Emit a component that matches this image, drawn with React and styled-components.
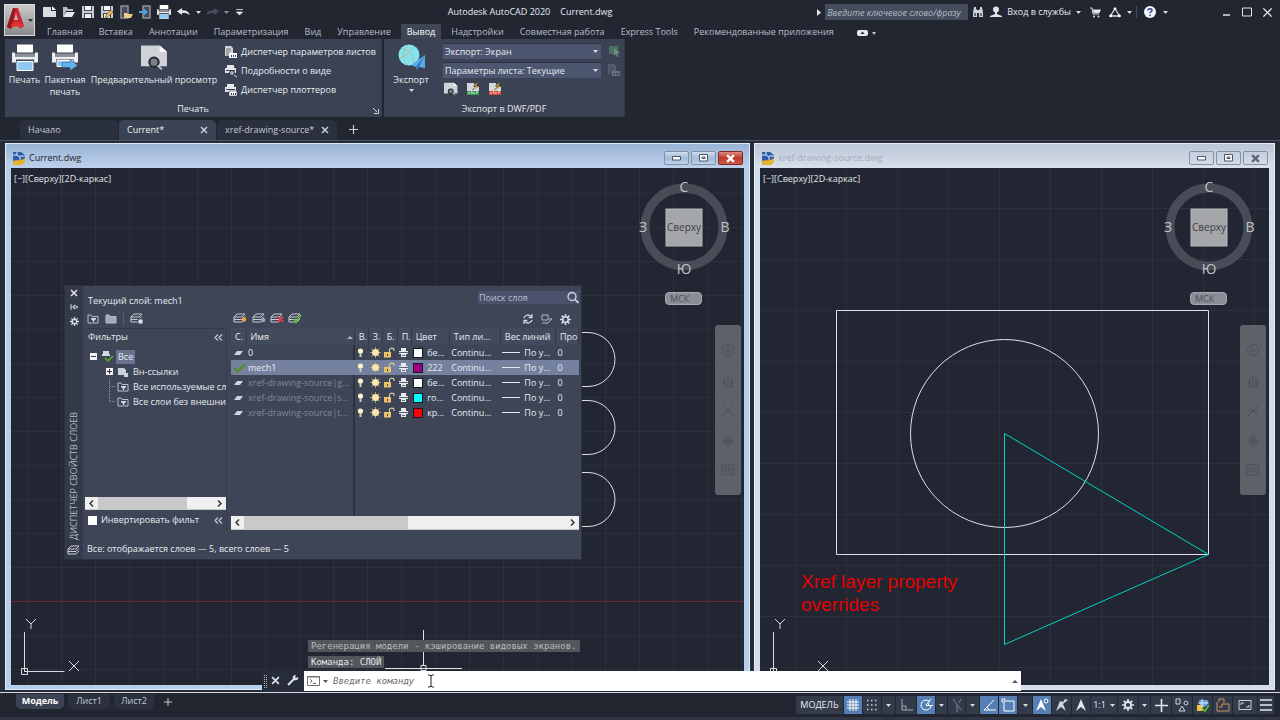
import React from "react";
import styled, { createGlobalStyle } from "styled-components";

const GlobalStyle = createGlobalStyle`
  * {
    box-sizing: border-box;
  }

  body {
    margin: 0;
    background: #212631;
    color: #e8ebf1;
    font-family: "Open Sans", "Noto Sans", sans-serif;
    font-size: 9px;
    line-height: 14px;
  }

  button, input, select {
    font: inherit;
    color: inherit;
    margin: 0;
    padding: 0;
    border: 0;
    background: none;
    border-radius: 0;
    outline: none;
  }

  a {
    color: inherit;
    text-decoration: none;
  }

  svg {
    display: block;
    flex: none;
  }
`;

const Shell = styled.div`
  display: flex;
  flex-direction: column;
  min-height: 100vh;
  overflow: hidden;
`;

/* ---------- title bar ---------- */

const Header = styled.header`
  display: flex;
  height: 39px;
  padding-left: 4px;
`;

const AppButton = styled.button`
  display: flex;
  align-items: center;
  justify-content: center;
  width: 31px;
  height: 32px;
  margin-top: 4px;
  background: linear-gradient(#c9c9c9, #8b8b8d);
  border: 1px solid #d9d9d9;
`;

const HeaderMain = styled.div`
  flex: 1;
  min-width: 0;
`;

const TitleRow = styled.div`
  display: flex;
  align-items: center;
  height: 24px;
  padding: 0 3px 0 5px;
`;

const ToolButton = styled.button`
  display: flex;
  align-items: center;
  justify-content: center;
  width: ${({ $w }) => $w || 19}px;
  height: ${({ $h }) => $h || 18}px;
  flex: none;
`;

const AppTitle = styled.div`
  display: flex;
  gap: 10px;
  margin: 0 auto;
  color: #e8eaf0;
  white-space: nowrap;
`;

const KeywordInput = styled.input`
  width: 143px;
  height: 16px;
  padding: 0 2px;
  background: #454c5b;
  font-style: italic;

  &::placeholder {
    color: #b4b9c5;
    opacity: 1;
  }
`;

const SignIn = styled.button`
  display: flex;
  align-items: center;
  gap: 5px;
  padding: 0 4px 0 2px;
  white-space: nowrap;
`;

const Divider = styled.span`
  width: 1px;
  height: 12px;
  margin: 0 3px;
  background: ${({ $color }) => $color || "#424959"};
`;

const WindowControls = styled.div`
  display: flex;
  margin-left: 47px;
`;

const RibbonTabs = styled.nav`
  display: flex;
  align-items: stretch;
  height: 15px;
  padding-left: 4px;
`;

const RibbonTab = styled.a`
  padding: 0 ${({ $active }) => ($active ? 6 : 8)}px;
  margin: 0 ${({ $active }) => ($active ? 2 : 0)}px;
  line-height: 15px;
  white-space: nowrap;
  color: ${({ $active }) => ($active ? "#ffffff" : "#b8bdc8")};
  background: ${({ $active }) => ($active ? "#3f4656" : "transparent")};
`;

/* ---------- ribbon ---------- */

const Ribbon = styled.section`
  display: flex;
  gap: 2px;
  height: 78px;
  padding-left: 5px;
`;

const Panel = styled.div`
  display: flex;
  flex-direction: column;
  background: #3b4253;
  border-right: 1px solid #333949;
`;

const PanelBody = styled.div`
  display: flex;
  flex: 1;
  padding-top: 3px;
`;

const PanelTitle = styled.div`
  display: flex;
  align-items: center;
  justify-content: center;
  position: relative;
  height: 16px;
`;

const Launcher = styled.button`
  position: absolute;
  right: 2px;
  bottom: 3px;
`;

const BigButton = styled.button`
  display: flex;
  flex-direction: column;
  align-items: center;
  width: ${({ $w }) => $w}px;
  gap: 3px;
  padding-top: 2px;
  line-height: 12px;
  white-space: nowrap;
`;

const SmallList = styled.div`
  display: flex;
  flex-direction: column;
  width: 159px;
  padding-left: 2px;
`;

const SmallButton = styled.button`
  display: flex;
  align-items: center;
  gap: 3px;
  height: 19px;
  white-space: nowrap;
`;

const ExportColumn = styled.div`
  display: flex;
  flex-direction: column;
  gap: 1px;
  margin: 0 2px 0 5px;
`;

const SelectRow = styled.div`
  display: flex;
  align-items: center;
  gap: 5px;
`;

const SelectWrap = styled.label`
  display: flex;
  align-items: center;
  width: 158px;
  height: 16px;
  padding-right: 3px;
  background: #4c566f;
  border-top: 1px solid #2c3240;
`;

const Select = styled.select`
  flex: 1;
  height: 15px;
  padding-left: 2px;
  appearance: none;
`;

const IconRow = styled.div`
  display: flex;
  gap: 8px;
  padding: 2px 0 0 1px;
`;

/* ---------- drawing tabs ---------- */

const FileTabs = styled.nav`
  display: flex;
  gap: 1px;
  height: 23px;
  padding: 3px 0 0 20px;
`;

const FileTab = styled.div`
  display: flex;
  align-items: center;
  justify-content: space-between;
  width: ${({ $w }) => $w}px;
  padding: 0 8px 0 8px;
  border-radius: 5px 5px 0 0;
  white-space: nowrap;
  color: ${({ $active }) => ($active ? "#f0f2f6" : "#c5c9d2")};
  background: ${({ $active }) => ($active ? "#3b4253" : "#2a303d")};
`;

/* ---------- document windows ---------- */

const Workspace = styled.main`
  position: relative;
  display: flex;
  flex: 1;
  gap: 4px;
  padding: 2px 5px;
  background: #252b37;
  border-top: 1px solid #4b5261;
  border-bottom: 1px solid #d5dae2;
`;

const DocWindow = styled.section`
  display: flex;
  flex-direction: column;
  flex: ${({ $grow }) => $grow} 1 0;
  min-width: 0;
  padding: 0 5px 4px;
  background: ${({ $active }) => ($active ? "#b7cfea" : "#d3dce9")};
  border: 1px solid ${({ $active }) => ($active ? "#dcebfa" : "#e7edf5")};
`;

const DocTitle = styled.header`
  display: flex;
  align-items: center;
  height: 24px;
  margin: 0 -5px;
  padding: 4px 6px 0 7px;
  gap: 4px;
  color: ${({ $active }) => ($active ? "#20242c" : "#a2acbb")};
  background: ${({ $active }) =>
    $active ? "linear-gradient(#9ab4d5, #bdd0ea)" : "linear-gradient(#bac5d6, #d8e0eb)"};
`;

const DocButtons = styled.div`
  display: flex;
  gap: 2px;
  margin-left: auto;
`;

const DocButton = styled.button`
  display: flex;
  align-items: center;
  justify-content: center;
  width: 25px;
  height: 14px;
  border: 1px solid ${({ $active, $close }) => ($close && $active ? "#7b2a26" : "#8391a8")};
  border-radius: 2px;
  background: ${({ $active, $close }) =>
    !$active
      ? "transparent"
      : $close
      ? "linear-gradient(#dd8d80, #bd3a2b 50%, #cf5a45)"
      : "linear-gradient(#d0deef, #a3bad7 50%, #bfd3ea)"};
`;

const Canvas = styled.div`
  position: relative;
  flex: 1;
  overflow: hidden;
  background-color: #212632;
  background-image: linear-gradient(to right, #2a313d 1px, transparent 1px),
    linear-gradient(#2a313d 1px, transparent 1px);
  background-size: ${({ $step }) => $step}px ${({ $step }) => $step}px;
  background-position: ${({ $origin }) => $origin};
`;

const ViewportLabel = styled.button`
  position: absolute;
  top: 4px;
  left: 3px;
  color: #e2e4ea;
`;

const Drawing = styled.svg`
  position: absolute;
  top: 0;
  left: 0;
  width: 100%;
  height: 100%;
`;

const Ucs = styled.svg`
  position: absolute;
  left: 9px;
  bottom: 5px;
`;

const ViewCube = styled.svg`
  position: absolute;
  top: 8px;
  right: 14px;
`;

const WcsButton = styled.button`
  position: absolute;
  top: 124px;
  right: 42px;
  width: 37px;
  height: 13px;
  padding-left: 4px;
  border-radius: 4px;
  border: 1px solid #a6a8af;
  background: #8b8e96;
  color: #4c4f59;
  line-height: 10px;
  text-align: left;
`;

const NavBar = styled.div`
  position: absolute;
  top: 157px;
  right: 3px;
  display: flex;
  flex-direction: column;
  align-items: center;
  justify-content: space-around;
  width: 26px;
  height: 170px;
  padding: 10px 0;
  border-radius: 3px;
  background: #5d6168;
`;

/* ---------- layer palette ---------- */

const Palette = styled.aside`
  position: absolute;
  top: 118px;
  left: 54px;
  display: flex;
  width: 516px;
  height: 273px;
  background: #3e4557;
  box-shadow: 0 0 0 1px #2c313e;
`;

const PaletteStrip = styled.div`
  display: flex;
  flex-direction: column;
  align-items: center;
  width: 18px;
  padding-bottom: 2px;
  background: #343a48;
`;

const StripTitle = styled.div`
  flex: 1;
  writing-mode: vertical-rl;
  transform: rotate(180deg);
  padding-top: 5px;
  color: #b6bbc6;
  white-space: nowrap;
`;

const PaletteMain = styled.div`
  display: flex;
  flex-direction: column;
  flex: 1;
  min-width: 0;
  padding: 0 2px;
`;

const PaletteTop = styled.div`
  display: flex;
  justify-content: space-between;
  height: 24px;
  padding: 5px 0 0 3px;
`;

const CurrentLayer = styled.span`
  padding-top: 3px;
`;

const SearchBox = styled.label`
  display: flex;
  align-items: center;
  width: 101px;
  height: 13px;
  background: #49526a;
`;

const SearchInput = styled.input`
  flex: 1;
  width: 80px;
  padding-left: 1px;

  &::placeholder {
    color: #b9bfce;
    opacity: 1;
  }
`;

const PaletteTools = styled.div`
  display: flex;
  align-items: center;
  justify-content: space-between;
  height: 18px;
  padding-right: 5px;
`;

const ToolGroup = styled.div`
  display: flex;
  align-items: center;
`;

const LayerTools = styled.div`
  display: flex;
  align-items: center;
  margin-left: 84px;
`;

const PaletteColumns = styled.div`
  display: flex;
  gap: 4px;
  height: 202px;
`;

const FilterColumn = styled.div`
  display: flex;
  flex-direction: column;
  width: 142px;
  border-right: 1px solid #363c4b;
`;

const FilterHead = styled.div`
  display: flex;
  align-items: center;
  justify-content: space-between;
  height: 17px;
  padding: 0 3px;
  border-top: 1px solid #333948;
`;

const Tree = styled.ul`
  flex: 1;
  margin: 0;
  padding: 4px 0 0;
  list-style: none;
`;

const TreeItem = styled.li`
  display: flex;
  align-items: center;
  gap: 2px;
  height: 15px;
  padding-left: ${({ $indent }) => $indent}px;
  white-space: nowrap;
`;

const TreeText = styled.span`
  padding: 0 2px;
  line-height: 14px;
  background: ${({ $active }) => ($active ? "#67738f" : "transparent")};
`;

const Scroll = styled.div`
  display: flex;
  align-items: center;
  justify-content: space-between;
  height: ${({ $h }) => $h}px;
  background: #f0f0f0;
  border-bottom: 1px solid #c8c8ca;
`;

const ScrollTrack = styled.div`
  flex: 1;
  height: 100%;
`;

const ScrollThumb = styled.div`
  width: ${({ $size }) => $size};
  height: 100%;
  background: #c9c9c9;
`;

const ScrollButton = styled.button`
  display: flex;
  justify-content: center;
  width: 13px;
`;

const InvertRow = styled.div`
  display: flex;
  align-items: center;
  justify-content: space-between;
  height: 20px;
  padding: 0 3px;
`;

const CheckLabel = styled.label`
  display: flex;
  align-items: center;
  gap: 4px;
  white-space: nowrap;
`;

const Checkbox = styled.input`
  appearance: none;
  flex: none;
  width: 9px;
  height: 9px;
  background: #ffffff;
`;

const TableColumn = styled.div`
  display: flex;
  flex-direction: column;
  flex: 1;
  min-width: 0;
`;

const TableArea = styled.div`
  flex: 1;
  background: linear-gradient(#2c3240, #2c3240) 122px 0 / 2px 100% no-repeat;
`;

const LayerTable = styled.table`
  width: 100%;
  table-layout: fixed;
  border-collapse: collapse;
`;

const Th = styled.th`
  width: ${({ $w }) => $w}px;
  height: 17px;
  padding: 0 0 0 4px;
  border-right: 1px solid #333948;
  background: #424a5d;
  font-weight: 400;
  text-align: left;
  white-space: nowrap;
`;

const ThInner = styled.span`
  display: flex;
  align-items: center;
  justify-content: space-between;
`;

const LayerRow = styled.tr`
  background: ${({ $active }) => ($active ? "#75829f" : "transparent")};
`;

const Td = styled.td`
  height: 15px;
  padding: 0 0 0 2px;
  line-height: 14px;
  white-space: nowrap;
  color: ${({ $dim }) => ($dim ? "#80889a" : "#e8ebf1")};
`;

const CellFlex = styled.span`
  display: flex;
  align-items: center;
  gap: 4px;
`;

const Swatch = styled.span`
  width: 10px;
  height: 10px;
  border: 1px solid #15181f;
  background: ${({ $color }) => $color};
`;

const PaletteStatus = styled.div`
  padding: 12px 2px 0;
`;

/* ---------- command line ---------- */

const CommandDock = styled.div`
  position: absolute;
  left: 262px;
  right: 259px;
  bottom: 1px;
`;

const History = styled.div`
  display: flex;
  flex-direction: column;
  align-items: flex-start;
  gap: 4px;
  padding: 0 0 3px 46px;
  font-family: "DejaVu Sans Mono", monospace;
`;

const HistoryLine = styled.span`
  padding: 0 3px;
  line-height: 12px;
  color: ${({ $dim }) => ($dim ? "#b9bbbd" : "#e6e7e9")};
  background: #53565a;
`;

const CommandRow = styled.div`
  display: flex;
  height: 20px;
  background: #262c38;
`;

const CommandField = styled.label`
  display: flex;
  align-items: center;
  flex: 1;
  gap: 3px;
  padding: 0 3px;
  background: #ffffff;
`;

const CommandInput = styled.input`
  flex: 1;
  min-width: 0;
  padding-left: 2px;
  color: #222222;
  font-family: "DejaVu Sans Mono", monospace;
  font-style: italic;

  &::placeholder {
    color: #6d6d6d;
    opacity: 1;
  }
`;

const TextCursor = styled.svg`
  position: absolute;
  left: 165px;
  bottom: 3px;
`;

/* ---------- status bar ---------- */

const StatusBar = styled.footer`
  display: flex;
  align-items: flex-start;
  justify-content: space-between;
  height: 27px;
  padding: 1px 6px 0 16px;
  border-bottom: 3px solid #2f3542;
`;

const LayoutTabs = styled.nav`
  display: flex;
  gap: 4px;
`;

const LayoutTab = styled.a`
  display: flex;
  justify-content: center;
  width: ${({ $w }) => $w}px;
  padding-bottom: 1px;
  border-radius: 0 0 5px 5px;
  font-weight: ${({ $active }) => ($active ? 700 : 400)};
  color: ${({ $active }) => ($active ? "#ffffff" : "#c3c8d1")};
  background: ${({ $active }) => ($active ? "#3b4253" : "#2a303d")};
`;

const StatusTools = styled.div`
  display: flex;
  gap: 1px;
  padding-top: 2px;
`;

const StatusButton = styled.button`
  display: flex;
  align-items: center;
  justify-content: center;
  gap: 4px;
  width: ${({ $w }) => $w || 18}px;
  height: 18px;
  background: ${({ $active }) => ($active ? "#5680b5" : "#333a49")};
  white-space: nowrap;
`;

/* ---------- icons ---------- */

const Icon = ({ w = 14, h = w, box, children }) => (
  <svg width={w} height={h} viewBox={box || `0 0 ${w} ${h}`} fill="none" aria-hidden="true">
    {children}
  </svg>
);

const Caret = ({ color = "#d5d9e2" }) => (
  <Icon w={5} h={3}>
    <path d="M0 0h5L2.500 3z" fill={color} />
  </Icon>
);

const Cross = ({ color = "#c9cdd6", size = 8, weight = 1.5 }) => (
  <Icon w={size} box="0 0 8 8">
    <path d="M1 1l6 6M7 1L1 7" stroke={color} strokeWidth={weight} />
  </Icon>
);

const Plus = ({ size = 8, color = "#c9cdd6" }) => (
  <Icon w={size} box="0 0 8 8">
    <path d="M4 0v8M0 4h8" stroke={color} strokeWidth={1} />
  </Icon>
);

const Chevron = ({ right }) => (
  <Icon w={5} h={7}>
    <path d={right ? "M1 0.500L4 3.500L1 6.500" : "M4 0.500L1 3.500L4 6.500"} stroke="#333" strokeWidth="1.500" />
  </Icon>
);

const Collapse = () => (
  <Icon w={9} h={7}>
    <path d="M4 0.500L1 3.500L4 6.500M8 0.500L5 3.500L8 6.500" stroke="#c3c9d6" strokeWidth="1.200" />
  </Icon>
);

const Printer = ({ w = 14, h = w, arrow }) => (
  <Icon w={w} h={h} box="0 0 26 26">
    <path d="M5 0h16v8H5z" fill="#fff" />
    <path d="M0 8h3v4h20V8h3v10h-4v-3H4v3H0z" fill="#eceef1" />
    <path d="M3 9h20v3H3z" fill="#8a8f98" />
    {arrow ? (
      <>
        <path d="M5 16h16v6H5z" fill="#8ec8f5" stroke="#fff" strokeWidth="1" />
        <path d="M10 18h8v-3l8 6-8 5v-3h-8z" fill="#5fb4f0" stroke="#3b4253" strokeWidth="0.500" />
      </>
    ) : (
      <path d="M5 17h16v9H5z" fill="#8ec8f5" stroke="#fff" strokeWidth="1" />
    )}
  </Icon>
);

const PreviewIcon = ({ w = 26, h = 25 }) => (
  <Icon w={w} h={h} box="0 0 26 25">
    <path d="M0 1h18l7 6v14H0z" fill="#cfd2d6" />
    <path d="M18 1v6h7z" fill="#fff" />
    <circle cx="12.500" cy="17" r="4.500" fill="#7a8089" stroke="#23272f" strokeWidth="2" />
    <path d="M16 20l4 4" stroke="#c3c7cc" strokeWidth="1.800" />
  </Icon>
);

const LogoA = () => (
  <Icon w={27} h={26}>
    <path d="M1 20L7 1h5l6 18-4 3-2-5H7l-2 5z" fill="#d2242f" />
    <path d="M1 20L7 1l2.500 1L6 17l-1 5z" fill="#97151f" />
    <path d="M8 13l2-7 2 7z" fill="#b5b5b5" />
    <path d="M5 18c4-4 8-4 13 1l-4 2c-3-2-5-2-8 0z" fill="#e0352f" />
    <path d="M22 12h5l-2.500 3z" fill="#333" />
  </Icon>
);

const NewIcon = () => (
  <Icon w={14} h={12}>
    <path d="M0 1h8v4h5v6H0z" fill="#d9dce0" />
    <path d="M9 0l4 4H9z" fill="#fff" />
  </Icon>
);

const OpenIcon = () => (
  <Icon w={14} h={12}>
    <path d="M1 1h4l1 2h5v2H4L1 11z" fill="#b9bcc2" />
    <path d="M4 6h9l-3 5H1z" fill="#e6e8eb" />
  </Icon>
);

const SaveIcon = ({ pencil }) => (
  <Icon w={14} h={14}>
    <path d="M1 1h12v12H1z" fill="#c9ccd1" />
    <path d="M3 1h8v5H3z" fill="#4b505a" />
    <path d="M4 1h6v4H4z" fill="#f4f5f7" />
    <path d="M3 8h8v5H3z" fill="#3d424c" />
    <path d="M4 9h6v4H4z" fill="#eceef0" />
    {pencil && <path d="M5 13l1-3 5-5 2 2-5 5z" fill="#e9b657" stroke="#6d4a20" strokeWidth="0.600" />}
  </Icon>
);

const DeviceIcon = ({ out }) => (
  <Icon w={14} h={14}>
    <path d={out ? "M5 1h7v12H5z" : "M2 1h7v12H2z"} stroke="#8d939d" strokeWidth="1.500" fill="#454b58" />
    {out ? (
      <path d="M1 6h5V3.500l4 3.500-4 3.500V8H1z" fill="#4da3e8" />
    ) : (
      <path d="M5 8h3l1 1h5l-2 4H5z" fill="#e9cf86" />
    )}
  </Icon>
);

const UndoIcon = ({ color = "#e3e6eb", flip }) => (
  <Icon w={14} h={10}>
    <path
      d="M0 4.500L5 1v2.200c4 0 7 1.300 8 5C11 6 8 5.800 5 5.900V8z"
      fill={color}
      transform={flip ? "matrix(-1 0 0 1 14 0)" : undefined}
    />
  </Icon>
);

const MoreIcon = () => (
  <Icon w={7} h={7}>
    <path d="M0 0.500h7M0.500 3h6L3.500 6z" stroke="#e1e4ea" fill="#e1e4ea" strokeWidth="0.800" />
  </Icon>
);

const BinocularsIcon = () => (
  <Icon w={12} h={12}>
    <path d="M2 1h2v2l1 1v7H1V7zM10 1H8v2L7 4v7h4V7zM5 4h2v3H5z" fill="#cfd3dc" />
    <path d="M2 7h2v3H2zM8 7h2v3H8z" fill="#666d7b" />
  </Icon>
);

const UserIcon = () => (
  <Icon w={12} h={12}>
    <circle cx="6" cy="3.500" r="3" fill="#dfe2e8" />
    <path d="M5 6h2v2l5 2v1H0v-1l5-2z" fill="#dfe2e8" />
  </Icon>
);

const CartIcon = () => (
  <Icon w={11} h={11}>
    <path d="M0 1h2l1 6h6" stroke="#e3e6ec" />
    <path d="M3 2.500h8L9.500 6H3.500z" fill="#e3e6ec" />
    <circle cx="4" cy="9.500" r="1" fill="#e3e6ec" />
    <circle cx="8.500" cy="9.500" r="1" fill="#e3e6ec" />
  </Icon>
);

const AutodeskIcon = () => (
  <Icon w={12} h={11}>
    <path d="M6 1.500L10.500 9h-9z" stroke="#d7dbe3" strokeWidth="1.300" />
    <circle cx="6" cy="1.800" r="1.400" fill="#fff" />
    <circle cx="1.700" cy="8.800" r="1.500" fill="#fff" />
    <circle cx="10.300" cy="8.800" r="1.500" fill="#fff" />
  </Icon>
);

const HelpIcon = () => (
  <Icon w={12} h={12}>
    <circle cx="6" cy="6" r="6" fill="#f2f4f8" />
    <path d="M4 4.600c0-2.600 4-2.400 4-.2C8 5.800 6 5.800 6 7.300" stroke="#2c3f8c" strokeWidth="1.400" />
    <circle cx="6" cy="9.300" r="0.900" fill="#2c3f8c" />
  </Icon>
);

const GlobeIcon = () => (
  <Icon w={27} h={27}>
    <circle cx="11" cy="11" r="10.500" fill="#7fe3f3" />
    <path d="M4 4c8 3 12 8 12 16M2 14C8 12 13 8 16 2M10 1C4 7 5 15 9 21" stroke="#c2b98d" />
    <path d="M27 11L13 21l5 2 1 3 2-3 6 1z" fill="#5aa9e8" />
    <path d="M27 11l-9 12 1 3 2-3z" fill="#2f77b5" />
  </Icon>
);

const PageSetupIcon = ({ dim }) => (
  <Icon w={14} h={14}>
    <path d="M1 1h6l2 2v8H1z" fill={dim ? "#596071" : "#d0d3d8"} />
    <path d="M2 4h5M2 6h5M2 8h3M2 10h3" stroke={dim ? "#3b4253" : "#5b616d"} strokeWidth="0.800" />
    <path d="M5 8h8v5H5z" fill={dim ? "#697083" : "#fff"} />
    <path d="M7 10h1v2H7zM9 10h1v2H9zM11 10h1v2h-1z" fill="#3b4253" />
  </Icon>
);

const SmallPrinter = ({ lens }) => (
  <Icon w={14} h={14}>
    <path d="M3 1h7v3H3zM1 4h11v5H1z" fill="#e4e6ea" />
    <path d="M2 6h9v1H2z" fill="#3b4253" />
    {lens ? (
      <>
        <circle cx="8" cy="9" r="2.500" fill="#aab0bb" stroke="#2b303b" />
        <path d="M10 11l3 2" stroke="#e4e6ea" />
      </>
    ) : (
      <>
        <path d="M5 8h8v5H5z" fill="#fff" stroke="#3b4253" strokeWidth="0.600" />
        <path d="M7 10h1v2H7zM9 10h1v2H9zM11 10h1v2h-1z" fill="#3b4253" />
      </>
    )}
  </Icon>
);

const PickIcon = () => (
  <Icon w={13} h={13}>
    <path d="M1 1h9v8H1z" fill="#49715f" />
    <path d="M6 3l6 5-3 .5 1.500 3-1.500.8L8 9 6 11z" fill="#6d8f80" />
  </Icon>
);

const FileKindIcon = ({ color }) => (
  <Icon w={14} h={14}>
    <path d="M1 1h7v4h5v8H1z" fill="#d4d7db" />
    <path d="M1 9h12v4H1z" fill={color} />
    <path d="M3 10v2M5 10h1v2M8 10v2M10 10h2M10 11h1" stroke="#fff" strokeWidth="0.800" />
    <path d="M12 0L7 4h3L6 8l7-4h-3z" fill="#f3c14b" stroke="#5c4b22" strokeWidth="0.400" />
  </Icon>
);

const DwgIcon = () => (
  <Icon w={12} h={13}>
    <path d="M0 0h8l4 3v7H0z" fill="#2b5ea8" />
    <path d="M0 3h4M7 4h5M4 0v3l3 2v3" stroke="#e6eefa" />
    <path d="M0 9c4-2 6 1 12-3v4l-3 3H0z" fill="#e7b32d" />
  </Icon>
);

const FolderIcon = ({ solid }) => (
  <Icon w={12} h={10}>
    <path d="M1 9V1h3l1 1.500h6V9z" stroke="#b9bfca" fill={solid ? "#a3a9b5" : "none"} />
    {!solid && <path d="M4 4h5v1L7 7v1H6V7L4 5z" fill="#d3d7df" />}
  </Icon>
);

const LayersIcon = ({ children }) => (
  <Icon w={14} h={12}>
    <path d="M4 1h8L9 4H1zM1 6.500h8l3-3M1 9h8l3-3M1 4v5" stroke="#c8ccd4" fill="none" />
    {children}
  </Icon>
);

const MiniLayer = () => (
  <Icon w={11} h={6}>
    <path d="M4 1h6L7 5H1z" fill="#c6d5ee" />
  </Icon>
);

const CheckIcon = () => (
  <Icon w={13} h={10}>
    <path d="M1 5l4 3.500L12 1" stroke="#4f8f1f" strokeWidth="2.200" />
  </Icon>
);

const BulbIcon = () => (
  <Icon w={9} h={11}>
    <circle cx="4.500" cy="4" r="2.600" fill="#fbf6cc" />
    <path d="M3.500 6h2v4h-2z" fill="#d2cfb2" />
  </Icon>
);

const SunIcon = () => (
  <Icon w={11} h={11}>
    <path d="M5.500 0v11M0 5.500h11M1.500 1.500l8 8M9.500 1.500l-8 8" stroke="#a79f7c" />
    <circle cx="5.500" cy="5.500" r="3.500" fill="#fbe7ae" />
  </Icon>
);

const LockIcon = () => (
  <Icon w={11} h={11}>
    <path d="M5.500 5V3c0-2.500 4.500-2.500 4.500 0v1" stroke="#d9cd9f" strokeWidth="1.100" />
    <path d="M0 5h7v5.500H0z" fill="#e8c36b" />
    <path d="M3 7h1v2H3z" fill="#4b3f1d" />
  </Icon>
);

const PlotIcon = () => (
  <Icon w={9} h={9}>
    <path d="M2 0h5v3H2zM0 3h9v3H0zM2 6h5v3H2z" fill="#e8eaee" />
    <path d="M0 4h9v1H0zM3 7h3v1H3z" fill="#596174" />
  </Icon>
);

const Gear = ({ w = 12, color = "#d4d8e0", hole = "#3e4557" }) => (
  <Icon w={w} box="0 0 12 12">
    <path d="M6 0v12M0 6h12M1.800 1.800l8.400 8.400M10.200 1.800l-8.400 8.400" stroke={color} strokeWidth="1.700" />
    <circle cx="6" cy="6" r="3" stroke={color} strokeWidth="1.800" fill={hole} />
  </Icon>
);

const Viewcube = () => (
  <ViewCube width="92" height="104" viewBox="0 0 92 104" aria-hidden="true">
    <circle cx="46" cy="51" r="39" fill="none" stroke="#484c56" strokeWidth="9" />
    <rect x="28" y="33" width="36" height="37" fill="#a5a6a9" stroke="#b8b9bb" />
    <g fontFamily="Open Sans, sans-serif" fontSize="14" fill="#c0c3ca" textAnchor="middle">
      <text x="46" y="16">С</text>
      <text x="46" y="98">Ю</text>
      <text x="5" y="56">З</text>
      <text x="87" y="56">В</text>
      <text x="46" y="55" fontSize="10" fill="#3d4048">Сверху</text>
    </g>
  </ViewCube>
);

const NavTools = () => (
  <NavBar>
    <Icon w={14}>
      <circle cx="7" cy="7" r="5.500" stroke="#4d5159" />
      <circle cx="7" cy="7" r="2" stroke="#4d5159" />
    </Icon>
    <Icon w={14} h={16}>
      <path d="M4 15V5M7 15V2M10 15V5M2 8l2 7h7l1-8" stroke="#4d5159" />
    </Icon>
    <Icon w={14}>
      <path d="M1 1l12 12M13 1L1 13M3 7h8" stroke="#4d5159" />
    </Icon>
    <Icon w={14}>
      <path d="M7 1v12M1 7h12M4 4h6v6H4z" stroke="#4d5159" />
    </Icon>
    <Icon w={14}>
      <path d="M1 2h12v10H1zM4 5h4v4H4zM10 5v6" stroke="#4d5159" />
    </Icon>
  </NavBar>
);

const UcsIcon = () => (
  <Ucs width="62" height="62" aria-hidden="true">
    <path d="M4.500 14v40M4.500 53.500h40" stroke="#d9dbe0" />
    <path d="M1.500 50.500h6v6h-6z" stroke="#d9dbe0" fill="none" />
    <path d="M6 1l5 5 5-5M11 6v5" stroke="#d9dbe0" fill="none" />
    <path d="M49 43l10 10M59 43L49 53" stroke="#d9dbe0" />
  </Ucs>
);

/* ---------- data ---------- */

const ribbonTabs = [
  "Главная",
  "Вставка",
  "Аннотации",
  "Параметризация",
  "Вид",
  "Управление",
  "Вывод",
  "Надстройки",
  "Совместная работа",
  "Express Tools",
  "Рекомендованные приложения",
];

const layers = [
  { name: "0", colorName: "бе...", color: "#ffffff" },
  { name: "mech1", colorName: "222", color: "#990080", active: true },
  { name: "xref-drawing-source|g...", colorName: "бе...", color: "#ffffff", dim: true },
  { name: "xref-drawing-source|s...", colorName: "го...", color: "#00ffff", dim: true },
  { name: "xref-drawing-source|t...", colorName: "кр...", color: "#ff0000", dim: true },
];

const columns = [
  ["С.", 15],
  ["Имя", 108],
  ["В.", 14],
  ["З.", 14],
  ["Б.", 15],
  ["П.", 14],
  ["Цвет", 38],
  ["Тип ли...", 51],
  ["Вес линий", 55],
  ["Про", 23],
];

const line = "#cdd2dc";

const statusItems = [
  { label: "Сетка", w: 18, active: true, icon: <path d="M4 1v12M7 1v12M10 1v12M1 4h12M1 7h12M1 10h12" stroke="#fff" /> },
  { label: "Шаг", w: 18, icon: <path d="M2 2.500h10M2 7h10M2 11.500h10" stroke={line} strokeWidth="1.500" strokeDasharray="1.500 2.500" /> },
  { label: "Параметры шага", w: 13, caret: true },
  { label: "Орто", w: 20, icon: <path d="M3 1v11h11M3 8h4v4" stroke="#a4abb8" /> },
  { label: "Полярное отслеживание", w: 18, active: true, icon: <path d="M11 4a5 5 0 1 0 1 4M7 7.500h7M7 7l5-6M9 5l1 3" stroke="#fff" /> },
  { label: "Углы", w: 11, caret: true },
  { label: "Изометрия", w: 17, icon: <path d="M3 1l8 11M7 7v7M11 1L9 5" stroke="#7f8795" /> },
  { label: "Изоплоскость", w: 13, caret: true },
  { label: "Объектное отслеживание", w: 18, active: true, icon: <path d="M12 2L2 12h12M5 9l2 3" stroke="#fff" /> },
  { label: "Объектная привязка", w: 18, active: true, icon: <path d="M5 3h8v10H3V5M1 1h3v3H1z" stroke="#fff" /> },
  { label: "Режимы привязки", w: 14, caret: true },
  {
    label: "Аннотации",
    w: 18,
    active: true,
    icon: (
      <>
        <path d="M6 1L1 13l5-4 5 4z" fill="#fff" />
        <circle cx="11" cy="3" r="2" stroke="#fff" />
      </>
    ),
  },
  { label: "Автомасштаб", w: 19, icon: <path d="M5 3L1 13l5-4 5 4-3-7 5-4-3-1-2 3z" fill={line} /> },
  { label: "Масштаб аннотаций", w: 18, icon: <path d="M7 1L2 13l5-4 5 4z" fill="#e5e8ee" /> },
];

const rest = [
  {
    label: "Изоляция объектов",
    w: 20,
    icon: <path d="M1 1h4v5H1zM7 8l3 5H4zM11 3a2 2 0 1 1 0 4 2 2 0 1 1 0-4" stroke={line} />,
  },
  {
    label: "Производительность",
    w: 19,
    icon: (
      <>
        <path d="M3 2h8l2 3-4 4H4z" fill="#6aa6e6" />
        <path d="M1 7h6v6H1z" fill="#f0c341" />
        <path d="M6 10l3 3 4-6" stroke="#55b045" strokeWidth="2" />
        <path d="M6 1v8M2 5h10" stroke="#dce9f8" />
      </>
    ),
  },
  {
    label: "Импорт",
    w: 19,
    icon: <path d="M1 13V4M3 4V1h5v4M1 13h12V6H6v3H3" stroke="#c9995f" />,
  },
  { label: "Чистый экран", w: 24, icon: <path d="M1 2.500h12v9H1zM3 7V5h3M11 7v2H8" stroke={line} /> },
  { label: "Адаптация", w: 16, icon: <path d="M1 2h12M1 7h12M1 12h12" stroke="#e5e8ee" strokeWidth="1.500" /> },
];

/* ---------- sections ---------- */

const TitleBar = () => (
  <Header>
    <AppButton aria-label="Меню приложения">
      <LogoA />
    </AppButton>
    <HeaderMain>
      <TitleRow>
        <ToolButton aria-label="Создать"><NewIcon /></ToolButton>
        <ToolButton aria-label="Открыть"><OpenIcon /></ToolButton>
        <ToolButton aria-label="Сохранить"><SaveIcon /></ToolButton>
        <ToolButton aria-label="Сохранить как"><SaveIcon pencil /></ToolButton>
        <ToolButton aria-label="Открыть из сети"><DeviceIcon /></ToolButton>
        <ToolButton aria-label="Сохранить в сети"><DeviceIcon out /></ToolButton>
        <ToolButton aria-label="Печать"><Printer w={14} /></ToolButton>
        <ToolButton $w={21} aria-label="Отменить"><UndoIcon /></ToolButton>
        <ToolButton $w={8} aria-label="Список отмены"><Caret /></ToolButton>
        <ToolButton aria-label="Повторить"><UndoIcon color="#454c5a" flip /></ToolButton>
        <ToolButton $w={10} aria-label="Список повтора"><Caret color="#8a909c" /></ToolButton>
        <ToolButton $w={16} aria-label="Адаптация панели"><MoreIcon /></ToolButton>
        <AppTitle>
          <span>Autodesk AutoCAD 2020</span>
          <span>Current.dwg</span>
        </AppTitle>
        <ToolButton $w={12} aria-label="Развернуть поиск">
          <Icon w={4} h={7}><path d="M0 0l4 3.500L0 7z" fill="#e1e4ea" /></Icon>
        </ToolButton>
        <KeywordInput placeholder="Введите ключевое слово/фразу" aria-label="Поиск" />
        <ToolButton $w={20} aria-label="Найти"><BinocularsIcon /></ToolButton>
        <SignIn>
          <UserIcon />
          Вход в службы
          <Caret />
        </SignIn>
        <ToolButton $w={20} aria-label="Магазин"><CartIcon /></ToolButton>
        <ToolButton $w={20} aria-label="Приложения"><AutodeskIcon /></ToolButton>
        <ToolButton $w={8} aria-label="Список приложений"><Caret /></ToolButton>
        <Divider />
        <ToolButton $w={20} aria-label="Справка"><HelpIcon /></ToolButton>
        <ToolButton $w={10} aria-label="Список справки"><Caret /></ToolButton>
        <WindowControls>
          <ToolButton $w={20} aria-label="Свернуть">
            <Icon w={8} h={8}><path d="M0 7h7" stroke="#e1e4ea" strokeWidth="1.500" /></Icon>
          </ToolButton>
          <ToolButton $w={20} aria-label="Развернуть">
            <Icon w={10} h={10}><path d="M0.500 1h9v8h-9z" stroke="#e1e4ea" /></Icon>
          </ToolButton>
          <ToolButton $w={20} aria-label="Закрыть"><Cross size={11} weight={1} color="#eceef2" /></ToolButton>
        </WindowControls>
      </TitleRow>
      <RibbonTabs>
        {ribbonTabs.map((tab) => (
          <RibbonTab key={tab} href="#ribbon" $active={tab === "Вывод"}>
            {tab}
          </RibbonTab>
        ))}
        <ToolButton $w={50} aria-label="Свернуть ленту">
          <Icon w={20} h={8}>
            <rect x="0" y="1" width="11" height="6" rx="2" fill="#e6e8ee" />
            <path d="M3.500 5h4L5.500 2.500z" fill="#212631" />
            <path d="M15 3h4l-2 3z" fill="#c3c8d1" />
          </Icon>
        </ToolButton>
      </RibbonTabs>
    </HeaderMain>
  </Header>
);

const RibbonPanels = () => (
  <Ribbon id="ribbon">
    <Panel>
      <PanelBody>
        <BigButton $w={39}>
          <Printer w={26} h={27} />
          Печать
        </BigButton>
        <BigButton $w={42}>
          <Printer w={26} h={27} arrow />
          <span>
            Пакетная
            <br />
            печать
          </span>
        </BigButton>
        <BigButton $w={136}>
          <PreviewIcon w={27} h={27} />
          Предварительный просмотр
        </BigButton>
        <SmallList>
          <SmallButton><PageSetupIcon />Диспетчер параметров листов</SmallButton>
          <SmallButton><SmallPrinter lens />Подробности о виде</SmallButton>
          <SmallButton><SmallPrinter />Диспетчер плоттеров</SmallButton>
        </SmallList>
      </PanelBody>
      <PanelTitle>
        Печать
        <Launcher aria-label="Параметры печати">
          <Icon w={6} h={6}><path d="M0 0l4 4M5.500 1v4.500H1" stroke="#cdd1da" /></Icon>
        </Launcher>
      </PanelTitle>
    </Panel>
    <Panel>
      <PanelBody>
        <BigButton $w={54}>
          <GlobeIcon />
          Экспорт
          <Caret />
        </BigButton>
        <ExportColumn>
          <SelectRow>
            <SelectWrap>
              <Select aria-label="Экспорт"><option>Экспорт: Экран</option></Select>
              <Caret />
            </SelectWrap>
            <ToolButton $w={16} aria-label="Выбрать рамку"><PickIcon /></ToolButton>
          </SelectRow>
          <SelectRow>
            <SelectWrap>
              <Select aria-label="Параметры листа"><option>Параметры листа: Текущие</option></Select>
              <Caret />
            </SelectWrap>
            <ToolButton $w={16} aria-label="Параметры листа"><PageSetupIcon dim /></ToolButton>
          </SelectRow>
          <IconRow>
            <button aria-label="Просмотр"><PreviewIcon w={14} h={14} /></button>
            <button aria-label="DWF"><FileKindIcon color="#3c9a57" /></button>
            <button aria-label="PDF"><FileKindIcon color="#d8443c" /></button>
          </IconRow>
        </ExportColumn>
      </PanelBody>
      <PanelTitle>Экспорт в DWF/PDF</PanelTitle>
    </Panel>
  </Ribbon>
);

const DocumentTitle = ({ title, active }) => (
  <DocTitle $active={active}>
    <DwgIcon />
    {title}
    <DocButtons>
      <DocButton $active={active} aria-label="Свернуть">
        <Icon w={9} h={5}><path d="M0.500 0.500h8v3.500h-8z" stroke="#4b5566" fill="#fff" /></Icon>
      </DocButton>
      <DocButton $active={active} aria-label="Развернуть">
        <Icon w={9} h={8}><path d="M0.500 0.500h8v6.500h-8zM3 3h3v1.500H3z" stroke="#4b5566" fill="#fff" /></Icon>
      </DocButton>
      <DocButton $active={active} $close aria-label="Закрыть">
        <Cross size={9} color={active ? "#ffffff" : "#5b6677"} weight={2} />
      </DocButton>
    </DocButtons>
  </DocTitle>
);

const LayerPalette = () => (
  <Palette>
    <PaletteStrip>
      <ToolButton $w={16} $h={14} aria-label="Закрыть"><Cross color="#e1e4ea" /></ToolButton>
      <ToolButton $w={16} $h={14} aria-label="Автоскрытие">
        <Icon w={9} h={8}><path d="M1 1v6M1 4h4M4 2l4 2-4 2z" stroke="#c9cdd6" /></Icon>
      </ToolButton>
      <ToolButton $w={16} $h={14} aria-label="Свойства"><Gear w={9} /></ToolButton>
      <StripTitle>ДИСПЕТЧЕР СВОЙСТВ СЛОЕВ</StripTitle>
      <LayersIcon />
    </PaletteStrip>
    <PaletteMain>
      <PaletteTop>
        <CurrentLayer>Текущий слой: mech1</CurrentLayer>
        <SearchBox>
          <SearchInput placeholder="Поиск слоя" aria-label="Поиск слоя" />
          <Icon w={13} h={13}>
            <circle cx="6" cy="5.500" r="4" stroke="#d6dae2" strokeWidth="1.300" />
            <path d="M9 8.500l3.500 3.500" stroke="#d6dae2" strokeWidth="1.600" />
          </Icon>
        </SearchBox>
      </PaletteTop>
      <PaletteTools>
        <ToolGroup>
          <ToolButton $w={16} aria-label="Новый фильтр"><FolderIcon /></ToolButton>
          <ToolButton aria-label="Новая группа"><FolderIcon solid /></ToolButton>
          <Divider $color="#596073" />
          <ToolButton $w={20} aria-label="Состояния слоев">
            <LayersIcon><path d="M8 6h5v5H8z" fill="#e1e4ea" stroke="#3e4557" /></LayersIcon>
          </ToolButton>
          <LayerTools>
            <ToolButton $w={18} aria-label="Создать слой">
              <LayersIcon><circle cx="11" cy="6.500" r="2.300" fill="#f0a33f" /></LayersIcon>
            </ToolButton>
            <ToolButton $w={19} aria-label="Создать замороженный слой">
              <LayersIcon><circle cx="11" cy="7" r="2.300" fill="#8ba6c4" /></LayersIcon>
            </ToolButton>
            <ToolButton $w={18} aria-label="Удалить слой">
              <LayersIcon><path d="M8 4l5 5M13 4L8 9" stroke="#e2384a" strokeWidth="1.800" /></LayersIcon>
            </ToolButton>
            <ToolButton $w={18} aria-label="Установить">
              <LayersIcon><path d="M6 6l2 3 5-7" stroke="#5cb83a" strokeWidth="2" /></LayersIcon>
            </ToolButton>
          </LayerTools>
        </ToolGroup>
        <ToolGroup>
          <ToolButton $w={18} aria-label="Обновить">
            <Icon w={10} h={10}><path d="M1 4a4 4 0 0 1 7-1.500M9 6a4 4 0 0 1-7 1.500M9 0v3.500H5.500M1 10V6.500h3.500" stroke="#ccd0d9" strokeWidth="1.300" /></Icon>
          </ToolButton>
          <ToolButton $w={19} aria-label="Замены">
            <Icon w={12} h={10}><path d="M1 1h6v5H1zM1 9h6l4-4H8" stroke="#b3b9c6" /></Icon>
          </ToolButton>
          <ToolButton $w={18} aria-label="Настройка"><Gear w={11} /></ToolButton>
        </ToolGroup>
      </PaletteTools>
      <PaletteColumns>
        <FilterColumn>
          <FilterHead>
            Фильтры
            <Collapse />
          </FilterHead>
          <Tree>
            <TreeItem $indent={5}>
              <Icon w={7} h={7}><path d="M0 0h7v7H0z" fill="#f1f3f6" /><path d="M1 3.500h5" stroke="#333" /></Icon>
              <Icon w={15} h={12}>
                <path d="M4 0h6v3H4zM3 3h8v2H3z" fill="#d4d8df" />
                <path d="M6 7l3 3 5-5" stroke="#4e9a35" strokeWidth="1.800" />
              </Icon>
              <TreeText $active>Все</TreeText>
            </TreeItem>
            <TreeItem $indent={21}>
              <Icon w={7} h={7}><path d="M0 0h7v7H0z" fill="#f1f3f6" /><path d="M1 3.500h5M3.500 1v5" stroke="#333" /></Icon>
              <Icon w={14} h={10}><path d="M3 1h6l2 2v5H3zM9 6h4v4H9z" fill="#ccd1da" /></Icon>
              <TreeText>Вн-ссылки</TreeText>
            </TreeItem>
            <TreeItem $indent={24}>
              <Icon w={6} h={15}><path d="M0.500 0v15M1 7.500h5" stroke="#9198a8" strokeDasharray="1 1" /></Icon>
              <FolderIcon />
              <TreeText>Все используемые сл</TreeText>
            </TreeItem>
            <TreeItem $indent={24}>
              <Icon w={6} h={15}><path d="M0.500 0v8M1 7.500h5" stroke="#9198a8" strokeDasharray="1 1" /></Icon>
              <FolderIcon />
              <TreeText>Все слои без внешни</TreeText>
            </TreeItem>
          </Tree>
          <Scroll $h={13}>
            <ScrollButton aria-label="Влево"><Chevron /></ScrollButton>
            <ScrollTrack><ScrollThumb $size="77%" /></ScrollTrack>
            <ScrollButton aria-label="Вправо"><Chevron right /></ScrollButton>
          </Scroll>
          <InvertRow>
            <CheckLabel>
              <Checkbox type="checkbox" />
              Инвертировать фильт
            </CheckLabel>
            <Collapse />
          </InvertRow>
        </FilterColumn>
        <TableColumn>
          <TableArea>
            <LayerTable>
              <thead>
                <tr>
                  {columns.map(([name, w]) => (
                    <Th key={name} $w={w}>
                      {name === "Имя" ? (
                        <ThInner>
                          Имя
                          <Icon w={8} h={4}><path d="M1 4h6L4 1z" fill="#a9b0bf" /></Icon>
                        </ThInner>
                      ) : (
                        name
                      )}
                    </Th>
                  ))}
                </tr>
              </thead>
              <tbody>
                {layers.map((layer) => (
                  <LayerRow key={layer.name} $active={layer.active}>
                    <Td>{layer.active ? <CheckIcon /> : <MiniLayer />}</Td>
                    <Td $dim={layer.dim}>{layer.name}</Td>
                    <Td><BulbIcon /></Td>
                    <Td><SunIcon /></Td>
                    <Td><LockIcon /></Td>
                    <Td><PlotIcon /></Td>
                    <Td>
                      <CellFlex>
                        <Swatch $color={layer.color} />
                        {layer.colorName}
                      </CellFlex>
                    </Td>
                    <Td>Continu...</Td>
                    <Td>
                      <CellFlex>
                        <Icon w={18} h={1}><path d="M0 0.500h18" stroke="#e4e7ee" /></Icon>
                        По у...
                      </CellFlex>
                    </Td>
                    <Td>0</Td>
                  </LayerRow>
                ))}
              </tbody>
            </LayerTable>
          </TableArea>
          <Scroll $h={14}>
            <ScrollButton aria-label="Влево"><Chevron /></ScrollButton>
            <ScrollTrack><ScrollThumb $size="51%" /></ScrollTrack>
            <ScrollButton aria-label="Вправо"><Chevron right /></ScrollButton>
          </Scroll>
        </TableColumn>
      </PaletteColumns>
      <PaletteStatus>Все: отображается слоев — 5, всего слоев — 5</PaletteStatus>
    </PaletteMain>
  </Palette>
);

const CommandLine = () => (
  <CommandDock>
    <History>
      <HistoryLine $dim>Регенерация модели - кэширование видовых экранов.</HistoryLine>
      <HistoryLine>Команда: СЛОЙ</HistoryLine>
    </History>
    <CommandRow>
      <Icon w={6} h={20}><path d="M2.500 4v13M4.500 4v13" stroke="#b6bbc5" strokeDasharray="1 1" /></Icon>
      <ToolButton $w={14} aria-label="Закрыть"><Cross color="#e1e4ea" size={9} /></ToolButton>
      <ToolButton $w={22} aria-label="Адаптация">
        <Icon w={12} h={12}><path d="M1 11l6-6" stroke="#e1e4ea" strokeWidth="2" /><path d="M6 5c-1-3 1-4 3-4L8 3l1 1 2-1c1 2-1 4-4 3z" fill="#e1e4ea" /></Icon>
      </ToolButton>
      <CommandField>
        <Icon w={13} h={10}><path d="M0.500 0.500h12v9h-12z" stroke="#6c7078" /><path d="M0 1h13" stroke="#6c7078" /><path d="M3 3l2 2-2 2M6 7.500h3" stroke="#6c7078" /></Icon>
        <Caret color="#555" />
        <CommandInput placeholder="Введите команду" aria-label="Команда" />
        <Icon w={6} h={3}><path d="M0 3h6L3 0z" fill="#555" /></Icon>
      </CommandField>
      <TextCursor width="8" height="14"><path d="M1 1h2l1 1 1-1h2M4 2v10M1 13h2l1-1 1 1h2" stroke="#222" fill="none" /></TextCursor>
    </CommandRow>
  </CommandDock>
);

const Status = () => (
  <StatusBar>
    <LayoutTabs>
      <LayoutTab href="#model" $w={48} $active>Модель</LayoutTab>
      <LayoutTab href="#sheet1" $w={42}>Лист1</LayoutTab>
      <LayoutTab href="#sheet2" $w={40}>Лист2</LayoutTab>
      <ToolButton $w={20} $h={15} aria-label="Новый лист"><Plus size={8} /></ToolButton>
    </LayoutTabs>
    <StatusTools>
      <StatusButton $w={47}>МОДЕЛЬ</StatusButton>
      {statusItems.map((item) => (
        <StatusButton key={item.label} $w={item.w} $active={item.active} aria-label={item.label}>
          {item.caret ? <Caret /> : <Icon w={14}>{item.icon}</Icon>}
        </StatusButton>
      ))}
      <StatusButton $w={26}>
        1:1
        <Caret />
      </StatusButton>
      <StatusButton $w={20} aria-label="Рабочее пространство"><Gear w={12} color="#e1e4ea" hole="#333a49" /></StatusButton>
      <StatusButton $w={11} aria-label="Список пространств"><Caret /></StatusButton>
      <StatusButton $w={20} aria-label="Монитор аннотаций"><Plus size={13} color="#e5e8ee" /></StatusButton>
      {rest.map((item) => (
        <StatusButton key={item.label} $w={item.w} aria-label={item.label}>
          <Icon w={14}>{item.icon}</Icon>
        </StatusButton>
      ))}
    </StatusTools>
  </StatusBar>
);

const App = () => {
  return (
    <Shell>
      <GlobalStyle />
      <TitleBar />
      <RibbonPanels />
      <FileTabs>
        <FileTab $w={98}>Начало</FileTab>
        <FileTab $w={97} $active>
          Current*
          <button aria-label="Закрыть Current"><Cross /></button>
        </FileTab>
        <FileTab $w={120}>
          xref-drawing-source*
          <button aria-label="Закрыть xref-drawing-source"><Cross /></button>
        </FileTab>
        <ToolButton $w={30} aria-label="Новый чертеж"><Plus size={9} /></ToolButton>
      </FileTabs>
      <Workspace>
        <DocWindow $grow={733} $active>
          <DocumentTitle title="Current.dwg" active />
          <Canvas $step={34} $origin="16px 25px">
            <Drawing aria-hidden="true">
              <path d="M0 433.500h2000" stroke="#6b2833" />
              <g stroke="#dfe1e6" fill="none">
                <path d="M560 164.500h17a27 27 0 0 1 0 54h-17" />
                <path d="M560 232.500h17a27 27 0 0 1 0 54h-17" />
                <path d="M560 304.500h17a27 27 0 0 1 0 54h-17" />
                <path d="M412.500 462v36M374 500.500h77M410 497.500h5v5h-5z" />
              </g>
            </Drawing>
            <ViewportLabel>[−][Сверху][2D-каркас]</ViewportLabel>
            <Viewcube />
            <WcsButton>МСК</WcsButton>
            <NavTools />
            <UcsIcon />
            <LayerPalette />
          </Canvas>
        </DocWindow>
        <DocWindow $grow={509}>
          <DocumentTitle title="xref-drawing-source.dwg" />
          <Canvas $step={51} $origin="35px 40px">
            <Drawing aria-hidden="true">
              <g fill="none">
                <path d="M76.500 142.500h372v244h-372z" stroke="#dfe1e6" />
                <circle cx="244.500" cy="265.500" r="94" stroke="#dfe1e6" />
                <path d="M244.500 265.500l204 121-204 90z" stroke="#00d2c4" />
              </g>
              <g fontFamily="Liberation Sans, sans-serif" fontSize="19" fill="#e60000">
                <text x="41" y="420">Xref layer property</text>
                <text x="41" y="443">overrides</text>
              </g>
            </Drawing>
            <ViewportLabel>[−][Сверху][2D-каркас]</ViewportLabel>
            <Viewcube />
            <WcsButton>МСК</WcsButton>
            <NavTools />
            <UcsIcon />
          </Canvas>
        </DocWindow>
        <CommandLine />
      </Workspace>
      <Status />
    </Shell>
  );
};

export default App;
